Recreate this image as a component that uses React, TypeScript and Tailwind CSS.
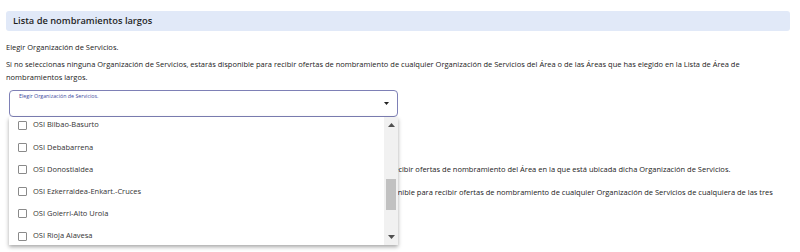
import React from "react";

const items = [
  "OSI Bilbao-Basurto",
  "OSI Debabarrena",
  "OSI Donostialdea",
  "OSI Ezkerraldea-Enkart.-Cruces",
  "OSI Goierri-Alto Urola",
  "OSI Rioja Alavesa",
];

export default function App() {
  return (
    <div className="w-[800px] h-[252px] bg-white overflow-hidden px-[6px] pt-[11px] font-['Open_Sans',sans-serif] text-[#222]">
      <div className="h-[20px] w-[784px] bg-[#e1e9f8] rounded-[3px] pl-[7px] flex items-center text-[9.3px] font-semibold text-[#1f1f1f]">
        Lista de nombramientos largos
      </div>
      <p className="mt-[10px] text-[7.5px] leading-[13px]">Elegir Organización de Servicios.</p>
      <p className="mt-[4px] text-[7.5px] leading-[13px] w-[750px]">
        Si no seleccionas ninguna Organización de Servicios, estarás disponible para recibir ofertas de nombramiento de cualquier Organización de Servicios del Área o de las Áreas que has elegido en la Lista de Área de nombramientos largos.
      </p>
      <div className="relative mt-[6px] ml-[3px] w-[389px]">
        <div className="h-[27px] border border-[#7e80b6] rounded-[4px] relative">
          <div className="absolute left-[9px] top-[2px] text-[5.3px] text-[#3d4a9e]">Elegir Organización de Servicios.</div>
          <svg className="absolute right-[8px] top-[11px]" width="5" height="3" viewBox="0 0 5 3">
            <path d="M0 0 L5 0 L2.5 3 Z" fill="#222" />
          </svg>
        </div>
        <div className="absolute left-0 top-[27px] w-[389px] h-[128px] bg-white shadow-[0_2px_4px_rgba(0,0,0,0.35)] flex z-10 overflow-hidden">
          <div className="flex-1 flex flex-col -mt-[3px]">
            {items.map((it) => (
              <div key={it} className="h-[22.2px] shrink-0 flex items-center pl-[9px]">
                <span className="w-[9px] h-[9px] border border-[#8a8a8a] rounded-[1px] mr-[6px] shrink-0" />
                <span className="text-[7.5px] text-[#333]">{it}</span>
              </div>
            ))}
          </div>
          <div className="w-[14px] h-full bg-[#f1f1f1] flex flex-col items-center justify-between py-[6px] relative">
            <svg width="7" height="4" viewBox="0 0 7 4"><path d="M0 4 L7 4 L3.5 0 Z" fill="#505050" /></svg>
            <div className="absolute left-[2px] top-[62px] w-[10px] h-[31px] bg-[#c1c1c1]" />
            <svg width="7" height="4" viewBox="0 0 7 4"><path d="M0 0 L7 0 L3.5 4 Z" fill="#505050" /></svg>
          </div>
        </div>
      </div>
      <div className="ml-[4px]">
        <p className="mt-[23px] text-[7.5px] leading-[13px]">Elegir Área.</p>
        <p className="mt-[10px] text-[7.5px] leading-[13px] w-[770px]">
          Si seleccionas una o más Organizaciones de Servicios de la lista anterior, estarás disponible únicamente para recibir ofertas de nombramiento del Área en la que está ubicada dicha Organización de Servicios.
        </p>
        <p className="mt-[10px] text-[7.5px] leading-[13px] w-[770px]">
          Si no seleccionas ninguna Organización de Servicios ni ningún Área de la lista de nombramientos, estarás disponible para recibir ofertas de nombramiento de cualquier Organización de Servicios de cualquiera de las tres Áreas.
        </p>
      </div>
    </div>
  );
}
